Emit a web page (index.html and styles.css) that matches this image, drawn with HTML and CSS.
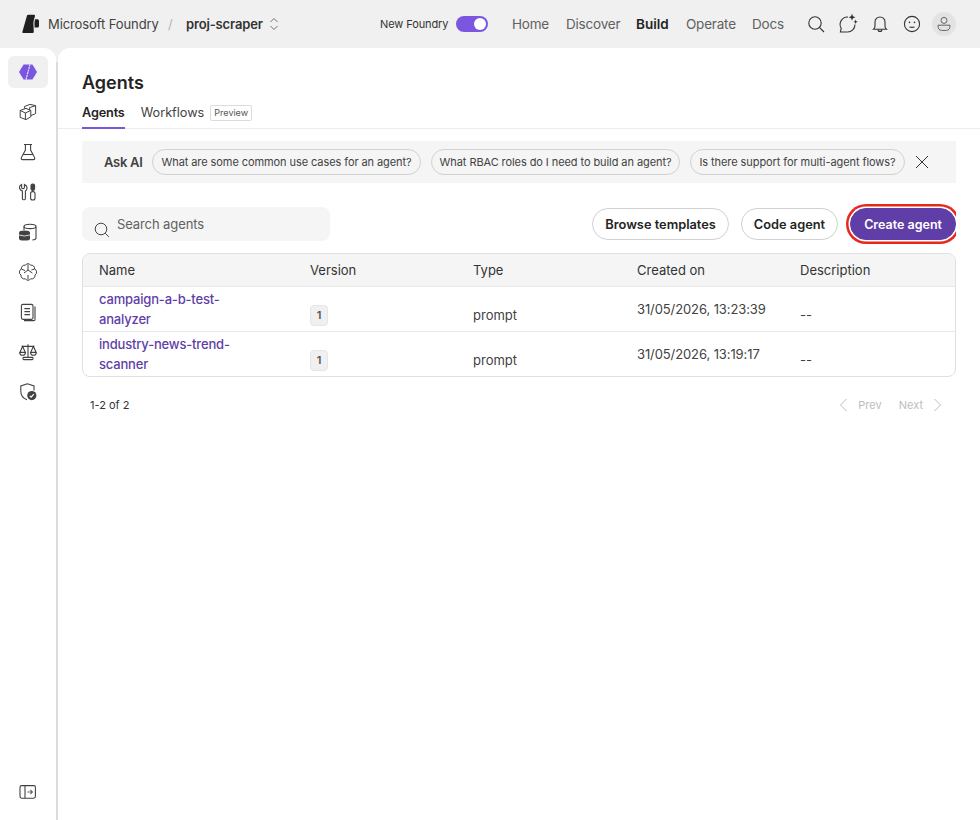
FILE: index.html
```html
<!DOCTYPE html>
<html lang="en">
<head>
  <meta charset="UTF-8">
  <meta name="viewport" content="width=device-width, initial-scale=1.0">
  <title>Agents - Microsoft Foundry</title>
  <link rel="stylesheet" href="styles.css">
</head>
<body>
  <header class="topbar">
    <div class="brand">
      <svg class="logo" width="18" height="20" viewBox="0 0 18 20"><path fill="#1f1f1f" d="M5 1.6 Q5.4 .8 6.4 .8 L12 .8 Q13.2 .8 13 2 L12 5.6 Q11.4 7.6 11.4 9.5 L11.8 17.8 Q11.8 19 10.6 19 L1.2 19 Q0 19 .4 17.8 Z"/><path fill="#1f1f1f" d="M13 5.2 H15.6 Q17 5.2 17 6.8 V12 Q17 13.6 15.6 13.6 H12.6 Q12 9 13 5.2 Z"/></svg>
      <span class="brand-name">Microsoft Foundry</span>
      <span class="slash">/</span>
      <span class="project">proj-scraper</span>
      <svg width="10" height="14" viewBox="0 0 10 14" fill="none" stroke="#707070" stroke-width="1"><path d="M1.5 5 5 1.5 8.5 5M1.5 9 5 12.5 8.5 9"/></svg>
    </div>
    <div class="toggle-wrap">
      <span class="toggle-label">New Foundry</span>
      <span class="toggle"><span class="knob"></span></span>
    </div>
    <nav class="nav">
      <a>Home</a>
      <a>Discover</a>
      <a class="active">Build</a>
      <a>Operate</a>
      <a>Docs</a>
    </nav>
    <div class="top-icons">
      <span class="top-icon"><svg width="20" height="20" viewBox="0 0 20 20" fill="none" stroke="#333" stroke-width="1.1"><circle cx="9" cy="9" r="6.2"/><path d="m13.4 13.4 4.6 4.6"/></svg></span>
      <span class="top-icon"><svg width="22" height="22" viewBox="0 0 22 22" fill="none" stroke="#333" stroke-width="1.1"><path d="M10.5 19 H3.4 L4.2 15.4 A7.5 7.5 0 0 1 11 4"/><path d="M18 11.5 A7.5 7.5 0 0 1 10.5 19"/><path d="M15 .8 16 3.2 18.4 4.2 16 5.2 15 7.6 14 5.2 11.6 4.2 14 3.2Z" fill="#333" stroke="none"/><path d="M18.6 6.6 19.2 8.2 20.8 8.8 19.2 9.4 18.6 11 18 9.4 16.4 8.8 18 8.2Z" fill="#333" stroke="none"/></svg></span>
      <span class="top-icon"><svg width="20" height="20" viewBox="0 0 20 20" fill="none" stroke="#333" stroke-width="1.1"><path d="M3.6 15.2 Q5 14 5 12 V8 a5 5 0 0 1 10 0 V12 Q15 14 16.4 15.2 Z"/><path d="M8 15.4 a2 2 0 0 0 4 0"/></svg></span>
      <span class="top-icon"><svg width="20" height="20" viewBox="0 0 20 20" fill="none" stroke="#333" stroke-width="1.1"><circle cx="10" cy="10" r="7.6"/><path d="M7.4 13 Q10 13.8 12.6 13"/><circle cx="7.5" cy="8.4" r=".8" fill="#333" stroke="none"/><circle cx="12.5" cy="8.4" r=".8" fill="#333" stroke="none"/></svg></span>
      <span class="avatar"><svg width="16" height="16" viewBox="0 0 16 16" fill="none" stroke="#666" stroke-width="1"><circle cx="8" cy="4.4" r="3"/><path d="M2 9.2 H14 Q14 14.4 10.4 14.4 H5.6 Q2 14.4 2 9.2Z"/></svg></span>
    </div>
  </header>

  <div class="shell">
    <aside class="sidebar">
      <div class="side-items">
        <span class="side-item selected"><svg width="20" height="20" viewBox="0 0 20 20"><path fill="#7a55e0" d="M5.6 2.4 H14.4 L19 10 14.4 17.6 H5.6 L1 10Z"/><path fill="none" stroke="#f3eefc" stroke-width="1.1" stroke-dasharray="2 .7" d="M12 2.4 8 17.6"/></svg></span>
        <span class="side-item"><svg width="20" height="20" viewBox="0 0 20 20" fill="none" stroke="#424242" stroke-width="1"><path d="M2.2 8.4 8 6.4 12.8 8.4V14.8L8 17.6 2.2 15.4Z"/><path d="M2.2 8.4 7.4 11V17.4M12.8 8.4 7.4 11"/><path d="M6.6 6.6V4.4L12 2.4 17.6 3.6V11.6L12.8 13.6M11.6 5.6 17.6 3.6M11.6 5.6V8"/></svg></span>
        <span class="side-item"><svg width="20" height="20" viewBox="0 0 20 20" fill="none" stroke="#424242" stroke-width="1.1"><path d="M6 2.5H14M7.4 2.5V8L3.4 15.6Q2.8 17.6 4.6 17.6H15.4Q17.2 17.6 16.6 15.6L12.6 8V2.5"/><path d="M5 12.5H15"/></svg></span>
        <span class="side-item"><svg width="20" height="20" viewBox="0 0 20 20" fill="none" stroke="#424242" stroke-width="1.1"><path d="M3.6 2.4V5.4Q3.6 6.6 5 6.6 6.4 6.6 6.4 5.4V2.4Q9 3.4 9 6 9 8.2 7.4 9V16.4Q7.4 17.8 6 17.8 4.4 17.8 4.4 16.4V9Q1.6 8 1.4 5.4 1.4 3.4 3.6 2.4Z"/><rect x="13" y="2" width="3.6" height="6.4" rx="1.6" fill="#424242"/><rect x="12.6" y="9.6" width="4.4" height="8.4" rx="2"/></svg></span>
        <span class="side-item"><svg width="20" height="20" viewBox="0 0 20 20" fill="none" stroke="#424242" stroke-width="1.1"><ellipse cx="12" cy="4.4" rx="6" ry="2.2"/><path d="M6 4.4V8M18 4.4V16Q18 17.8 14.4 18"/><path fill="#424242" stroke="none" d="M1 10.4Q1 8.4 6.5 8.4T12 10.4V16.4Q12 18.6 6.5 18.6T1 16.4Z"/><path stroke="#fff" stroke-width=".8" d="M1 13Q6.5 15 12 13"/></svg></span>
        <span class="side-item"><svg width="20" height="20" viewBox="0 0 20 20" fill="none" stroke="#424242" stroke-width="1"><path d="M7.4 3.2A3 3 0 0 1 12.6 3.2 3.4 3.4 0 0 1 16.6 7 3.4 3.4 0 0 1 17 13 3.4 3.4 0 0 1 12.6 16.8 3 3 0 0 1 7.4 16.8 3.4 3.4 0 0 1 3 13 3.4 3.4 0 0 1 3.4 7 3.4 3.4 0 0 1 7.4 3.2Z"/><path d="M10 2.6V8L6 11M10 8 14.4 11M10 13V17.4M3.4 7 7 8.6M16.6 7 13.4 8"/></svg></span>
        <span class="side-item"><svg width="20" height="20" viewBox="0 0 20 20" fill="none" stroke="#424242" stroke-width="1.1"><rect x="3.4" y="2.4" width="11.6" height="15" rx="1.6"/><path d="M6.4 6.6H12M6.4 9.6H12M6.4 12.6H12M17 4.6V17.4Q17 18.6 15.8 18.6H6"/></svg></span>
        <span class="side-item"><svg width="20" height="20" viewBox="0 0 20 20" fill="none" stroke="#424242" stroke-width="1.1"><path d="M10 2.2V15.4M3.6 4.4H16.4M4.6 4.4 1.8 10.4H7.4ZM15.4 4.4 12.6 10.4H18.2Z"/><path d="M1.8 10.4A2.8 2.8 0 0 0 7.4 10.4M12.6 10.4A2.8 2.8 0 0 0 18.2 10.4"/><rect x="5" y="15.4" width="10" height="2.2" rx=".8"/></svg></span>
        <span class="side-item"><svg width="20" height="20" viewBox="0 0 20 20" fill="none" stroke="#424242" stroke-width="1.1"><path d="M9.4 1.8 16 4V8.6M9 17.8Q2.8 15.6 2.8 9.6V4L9.4 1.8"/><circle cx="13.8" cy="13.6" r="4.6" fill="#424242" stroke="none"/><path stroke="#fff" d="m11.8 13.8 1.4 1.4 2.6-3"/></svg></span>
      </div>
      <span class="side-item side-bottom"><svg width="18" height="16" viewBox="0 0 18 16" fill="none" stroke="#424242" stroke-width="1.1"><rect x="1" y="1.6" width="15.4" height="12.6" rx="1.6"/><path d="M6 1.6V14.2"/><path d="M8.4 8H13M11.4 6 13.4 8 11.4 10" stroke="#666"/></svg></span>
    </aside>

    <main class="main">
      <div class="page-head">
        <h1>Agents</h1>
        <div class="tabs">
          <span class="tab current">Agents</span>
          <span class="tab">Workflows</span>
          <span class="preview">Preview</span>
        </div>
      </div>

      <div class="content">
        <div class="ask">
          <span class="ask-label">Ask AI</span>
          <span class="chip">What are some common use cases for an agent?</span>
          <span class="chip">What RBAC roles do I need to build an agent?</span>
          <span class="chip">Is there support for multi-agent flows?</span>
          <svg width="14" height="14" viewBox="0 0 14 14" fill="none" stroke="#333" stroke-width="1"><path d="M1 1 13 13M13 1 1 13"/></svg>
        </div>

        <div class="toolbar">
          <div class="search">
            <svg class="search-icon" width="16" height="16" viewBox="0 0 16 16" fill="none" stroke="#444" stroke-width="1"><circle cx="7" cy="7" r="5.8"/><path d="m11.2 11.2 3.6 3.6"/></svg>
            <span>Search agents</span>
          </div>
          <div class="actions">
            <button class="btn">Browse templates</button>
            <button class="btn">Code agent</button>
            <button class="btn primary">Create agent</button>
          </div>
        </div>

        <div class="table-box">
          <table>
            <thead>
              <tr><th class="col-name">Name</th><th class="col-mid">Version</th><th class="col-type">Type</th><th class="col-mid">Created on</th><th>Description</th></tr>
            </thead>
            <tbody>
              <tr>
                <td><a class="agent-link">campaign-a-b-test-analyzer</a></td>
                <td><span class="badge">1</span></td>
                <td class="low">prompt</td>
                <td class="date">31/05/2026, 13:23:39</td>
                <td class="low">--</td>
              </tr>
              <tr>
                <td><a class="agent-link">industry-news-trend-scanner</a></td>
                <td><span class="badge">1</span></td>
                <td class="low">prompt</td>
                <td class="date">31/05/2026, 13:19:17</td>
                <td class="low">--</td>
              </tr>
            </tbody>
          </table>
        </div>

        <div class="pager">
          <span class="count">1-2 of 2</span>
          <div class="pager-btns">
            <svg width="12" height="14" viewBox="0 0 12 14" fill="none" stroke="#bdbdbd" stroke-width="1"><path d="M8.5 1 2.5 7 8.5 13"/></svg>
            <span class="pg-prev">Prev</span>
            <span class="pg-next">Next</span>
            <svg width="12" height="14" viewBox="0 0 12 14" fill="none" stroke="#bdbdbd" stroke-width="1"><path d="M3.5 1 9.5 7 3.5 13"/></svg>
          </div>
        </div>
      </div>
    </main>
  </div>
</body>
</html>
```

FILE: styles.css
```css
* {
  box-sizing: border-box;
}

body {
  margin: 0;
  height: 820px;
  overflow: hidden;
  display: flex;
  flex-direction: column;
  background-color: #f0f0f0;
  color: #242424;
  font-family: Inter, "Liberation Sans", sans-serif;
  font-size: 13px;
}

/* top bar */
.topbar {
  height: 48px;
  flex: none;
  display: flex;
  align-items: center;
  padding-left: 22px;
}

.brand {
  width: 358px;
  flex: none;
  display: flex;
  align-items: center;
}

.logo {
  margin-right: 8px;
}

.brand-name {
  color: #424242;
  font-size: 13px;
  letter-spacing: -0.1px;
  width: 120px;
  white-space: nowrap;
}

.slash {
  color: #b5b5b5;
  width: 18px;
}

.project {
  color: #333;
  font-size: 13px;
  font-weight: 600;
  letter-spacing: -0.15px;
  margin-right: 6px;
}

.toggle-wrap {
  width: 132px;
  flex: none;
  display: flex;
  align-items: center;
  gap: 8px;
}

.toggle-label {
  font-size: 11px;
  letter-spacing: -0.1px;
  color: #333;
  width: 68px;
  white-space: nowrap;
}

.toggle {
  width: 32px;
  height: 16px;
  border-radius: 8px;
  background-color: #7b57e0;
  display: flex;
  align-items: center;
  justify-content: flex-end;
  padding-right: 2px;
}

.knob {
  width: 12px;
  height: 12px;
  border-radius: 50%;
  background-color: white;
}

.nav {
  width: 292px;
  flex: none;
  display: flex;
  font-size: 13.5px;
  letter-spacing: -0.2px;
  color: #616161;
}

.nav a:nth-child(1) { width: 54px; }
.nav a:nth-child(2) { width: 70px; }
.nav a:nth-child(3) { width: 50px; }
.nav a:nth-child(4) { width: 66px; }

.nav .active {
  color: #242424;
  font-weight: 600;
  letter-spacing: 0;
}

.top-icons {
  display: flex;
  align-items: center;
  gap: 8px;
}

.top-icon {
  width: 24px;
  height: 24px;
  display: flex;
  align-items: center;
  justify-content: center;
}

.avatar {
  width: 24px;
  height: 24px;
  border-radius: 50%;
  background-color: #e3e3e3;
  display: flex;
  align-items: center;
  justify-content: center;
}

/* shell */
.shell {
  flex: 1;
  display: flex;
  gap: 2px;
  background: linear-gradient(#f0f0f0 14px, #dcdcdc 14px);
  min-height: 0;
}

.sidebar {
  width: 56px;
  flex: none;
  background-color: white;
  border-top-right-radius: 12px;
  padding: 8px 8px 12px;
  display: flex;
  flex-direction: column;
  justify-content: space-between;
}

.side-items {
  display: flex;
  flex-direction: column;
  gap: 8px;
}

.side-item {
  width: 40px;
  height: 32px;
  border-radius: 6px;
  display: flex;
  align-items: center;
  justify-content: center;
}

.selected {
  background-color: #f0f0f0;
}

.main {
  flex: 1;
  min-width: 0;
  background-color: white;
  border-top-left-radius: 12px;
}

.page-head {
  height: 81px;
  border-bottom: 1px solid #ececec;
  padding: 23px 24px 0;
}

h1 {
  margin: 0;
  font-size: 18px;
  line-height: 24px;
  font-weight: 600;
  color: #242424;
}

.tabs {
  display: flex;
  align-items: center;
  margin-top: 6px;
  font-size: 12.7px;
  height: 28px;
}

.tab {
  color: #424242;
  height: 28px;
  line-height: 20px;
  margin-right: 6px;
  padding-top: 2px;
}

.tab.current {
  color: #242424;
  font-weight: 600;
  letter-spacing: -0.15px;
  border-bottom: 2px solid #7b57e0;
  margin-right: 16px;
}

.preview {
  font-size: 9px;
  line-height: 14px;
  padding: 0 3px;
  margin-bottom: 4px;
  border: 1px solid #dcdcdc;
  border-radius: 2px;
  color: #555;
}

.content {
  padding: 12px 24px 0;
}

.ask {
  height: 42px;
  background-color: #f5f5f5;
  display: flex;
  align-items: center;
  padding-left: 22px;
}

.ask-label {
  font-weight: 600;
  letter-spacing: -0.3px;
  color: #424242;
  margin-right: 10px;
  white-space: nowrap;
}

.chip {
  height: 26px;
  line-height: 24px;
  border: 1px solid #d1d1d1;
  border-radius: 13px;
  padding: 0 8px;
  font-size: 11px;
  letter-spacing: -0.08px;
  color: #424242;
  margin-right: 10px;
  white-space: nowrap;
}

.toolbar {
  display: flex;
  justify-content: space-between;
  align-items: center;
  margin-top: 20px;
  padding: 4px 0;
  overflow: hidden;
  margin-bottom: 8px;
}

.search {
  width: 248px;
  height: 34px;
  background-color: #f5f5f5;
  border-radius: 8px;
  display: flex;
  align-items: center;
  padding-left: 12px;
  color: #616161;
  letter-spacing: -0.1px;
}

.search-icon {
  margin-top: 11px;
  margin-right: 7px;
  flex: none;
}

.actions {
  display: flex;
  gap: 12px;
}

.btn {
  height: 32px;
  padding: 0 12px;
  border: 1px solid #d1d1d1;
  border-radius: 16px;
  background-color: white;
  color: #242424;
  font-family: inherit;
  font-size: 12.8px;
  font-weight: 600;
}

.primary {
  background-color: #5f3ea8;
  border-color: #5f3ea8;
  color: white;
  padding: 0 13px;
  font-size: 12.5px;
  box-shadow: 0 0 0 1.5px white, 0 0 0 4px #e8281e;
}

.table-box {
  height: 124px;
  border: 1px solid #e0e0e0;
  border-radius: 8px;
  overflow: hidden;
}

table {
  width: 100%;
  table-layout: fixed;
  border-collapse: collapse;
}

th {
  height: 32px;
  background-color: #f5f5f5;
  font-weight: 400;
  text-align: left;
  padding: 0 0 0 16px;
  color: #333;
}

.col-name { width: 211px; }
.col-mid { width: 163px; }
.col-type { width: 164px; }

td {
  height: 45px;
  padding: 0 0 0 16px;
  border-top: 1px solid #e8e8e8;
  color: #424242;
}

.agent-link {
  display: block;
  width: 140px;
  line-height: 20px;
  color: #5f3ea8;
  font-weight: 500;
  letter-spacing: -0.18px;
}

.badge {
  display: block;
  width: 18px;
  height: 21px;
  margin-top: 13px;
  border-radius: 4px;
  background-color: #f0f0f0;
  border: 1px solid #e6e6e6;
  font-size: 11px;
  font-weight: 600;
  line-height: 19px;
  text-align: center;
  color: #555;
}

.low {
  padding-top: 12px;
}

.date {
  letter-spacing: -0.1px;
}

.pager {
  display: flex;
  justify-content: space-between;
  align-items: center;
  height: 28px;
  margin-top: 14px;
  padding: 0 13px 0 8px;
}

.count {
  font-size: 11px;
  color: #333;
}

.pager-btns {
  display: flex;
  align-items: center;
  color: #bdbdbd;
  font-size: 11px;
}

.pg-prev {
  margin-left: 8px;
}

.pg-next {
  margin: 0 8px 0 17px;
}
```
